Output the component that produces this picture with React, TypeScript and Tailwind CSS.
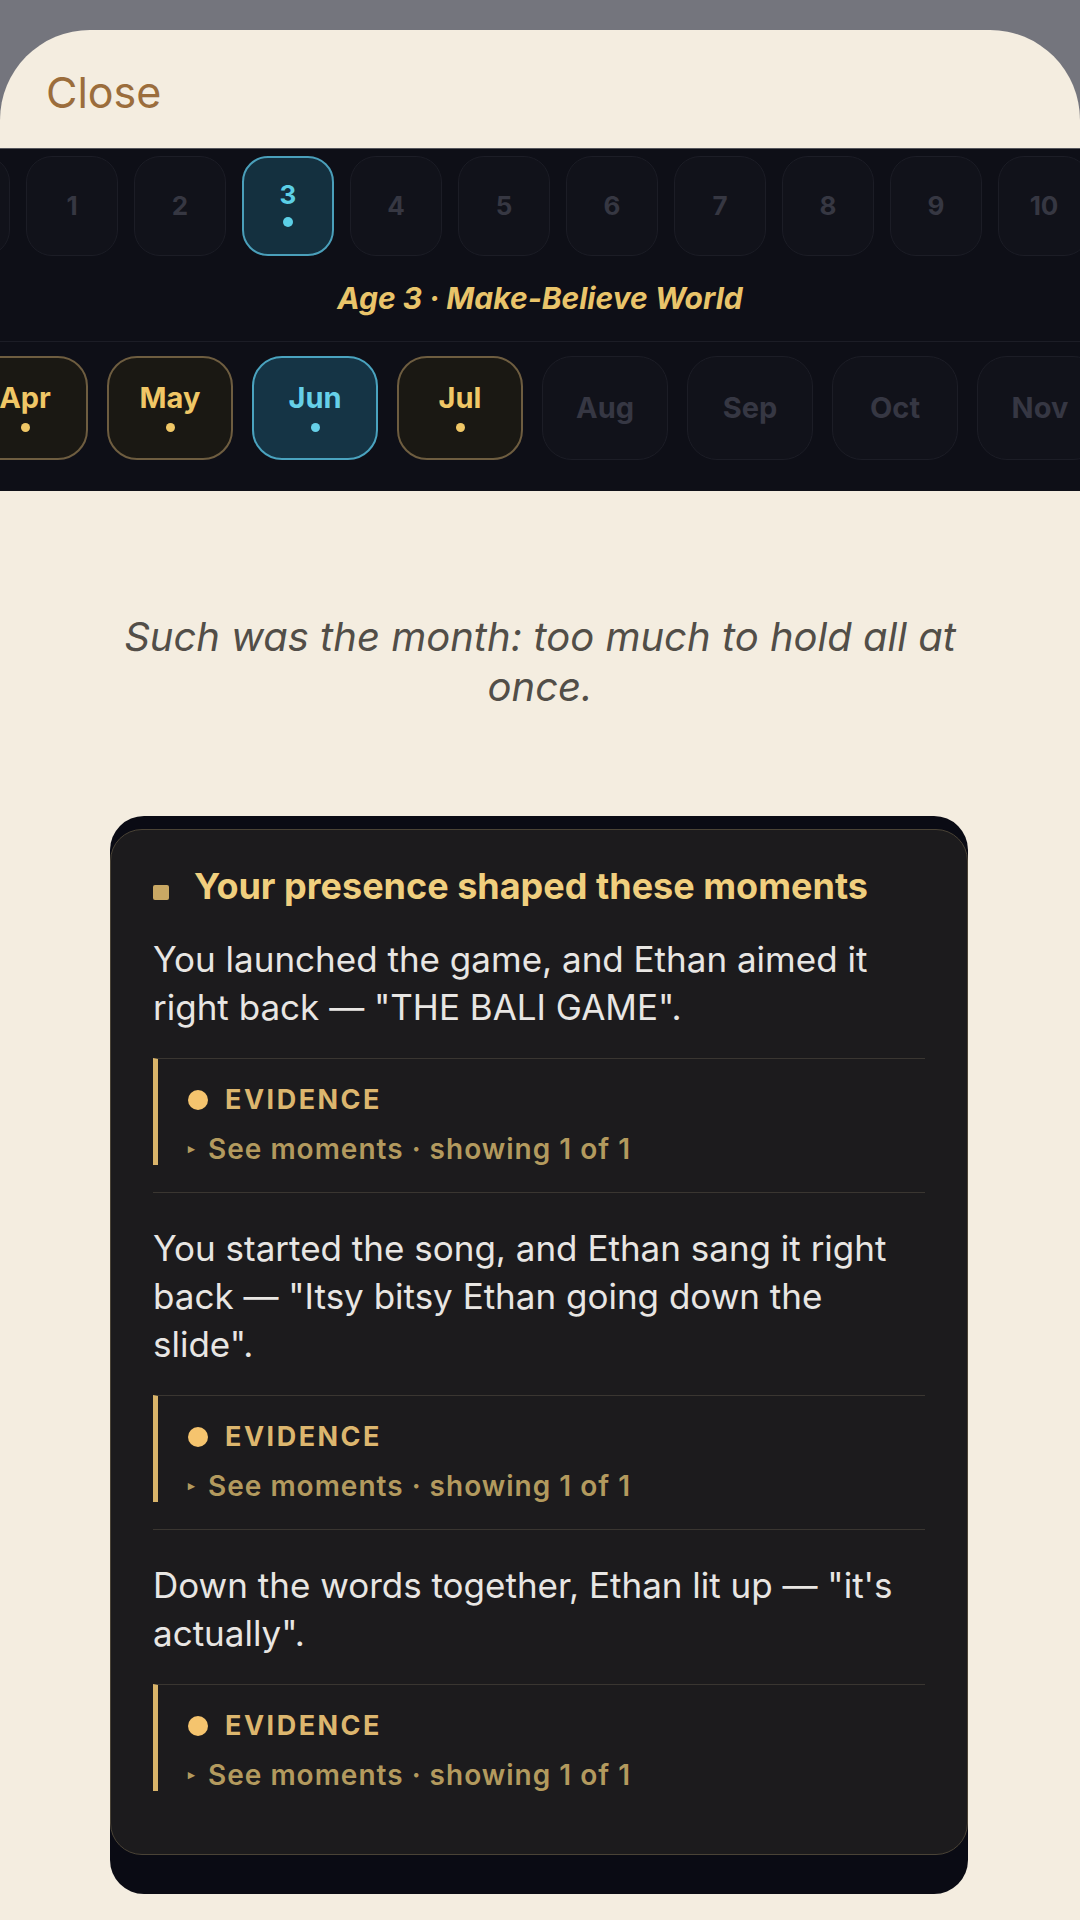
const ages = [0, 1, 2, 3, 4, 5, 6, 7, 8, 9, 10]
const months = [
  { m: "Apr", state: "done" },
  { m: "May", state: "done" },
  { m: "Jun", state: "active" },
  { m: "Jul", state: "done" },
  { m: "Aug", state: "off" },
  { m: "Sep", state: "off" },
  { m: "Oct", state: "off" },
  { m: "Nov", state: "off" },
  { m: "Dec", state: "off" },
]

const moments = [
  'You launched the game, and Ethan aimed it right back — "THE BALI GAME".',
  'You started the song, and Ethan sang it right back — "Itsy bitsy Ethan going down the slide".',
  'Down the words together, Ethan lit up — "it\'s actually".',
]

function AgeChip({ n }: { n: number }) {
  const active = n === 3
  return (
    <div
      className={`shrink-0 w-[92px] h-[100px] rounded-[26px] flex flex-col items-center justify-center ${
        active
          ? "bg-[#14303f] border-2 border-[#4a9fba]"
          : "bg-[#11121a] border-[1.5px] border-[#1c1d26]"
      }`}
    >
      <span
        className={`text-[26px] leading-[28px] font-bold ${
          active ? "text-[#5ccfe6] mt-[-4px]" : "text-[#363742]"
        }`}
      >
        {n}
      </span>
      {active && <span className="mt-[8px] h-[10px] w-[10px] rounded-full bg-[#5ccfe6]" />}
    </div>
  )
}

function MonthChip({ m, state }: { m: string; state: string }) {
  const box =
    state === "active"
      ? "bg-[#153445] border-2 border-[#4aa3bf]"
      : state === "done"
      ? "bg-[#1a1813] border-2 border-[#6e5d40]"
      : "bg-[#11121a] border-[1.5px] border-[#1c1d26]"
  const txt =
    state === "active" ? "text-[#66d0e8]" : state === "done" ? "text-[#f0c766]" : "text-[#363743]"
  const dot = state === "active" ? "bg-[#66d0e8]" : "bg-[#f0c766]"
  return (
    <div
      className={`shrink-0 w-[126px] h-[104px] rounded-[30px] flex flex-col items-center justify-center ${box}`}
    >
      <span className={`text-[29px] leading-[30px] font-bold ${txt} ${state === "off" ? "" : "mt-[-2px]"}`}>
        {m}
      </span>
      {state !== "off" && <span className={`mt-[10px] h-[9px] w-[9px] rounded-full ${dot}`} />}
    </div>
  )
}

function Evidence() {
  return (
    <div className="mt-[27px] border-t border-l-[5px] border-t-[#3a3631] border-l-[#d9b46a] pl-[30px] pt-[25px]">
      <div className="flex items-center h-[32px]">
        <span className="h-[20px] w-[20px] rounded-full bg-[#f5c46e]" />
        <span className="ml-[17px] text-[27px] font-bold tracking-[2.5px] text-[#dcb66e]">EVIDENCE</span>
      </div>
      <div className="flex items-center h-[32px] mt-[17px] text-[28px] font-semibold tracking-[1px] text-[#b39a5e]">
        <span className="text-[13px] mr-[12px]">▸</span>
        <span>See moments · showing 1 of 1</span>
      </div>
    </div>
  )
}

export default function App() {
  return (
    <div
      className="w-[1080px] h-[1920px] overflow-hidden bg-[#74757d]"
      style={{ fontFamily: "Inter, 'Liberation Sans', sans-serif" }}
    >
      <div className="mt-[30px] rounded-t-[90px] bg-[#f4ede0] h-[1890px] overflow-hidden">
        <div className="h-[118px] px-[46px] flex items-center pt-[6px]">
          <span className="text-[43px] text-[#9b6d3c]">Close</span>
        </div>

        <div className="bg-[#0e0f17] border-t border-[#55565c] pt-[7px] pb-[31px] overflow-hidden">
          <div className="flex gap-[16px] -ml-[82px]">
            {ages.map((n) => (
              <AgeChip key={n} n={n} />
            ))}
          </div>
          <div className="mt-[22px] text-center text-[30px] leading-[40px] font-bold italic text-[#e9c46a]">
            Age 3 · Make-Believe World
          </div>
          <div className="mt-[23px] border-t border-[#1c1d26]" />
          <div className="mt-[14px] flex gap-[19px] -ml-[38px]">
            {months.map((x) => (
              <MonthChip key={x.m} m={x.m} state={x.state} />
            ))}
          </div>
        </div>

        <p className="mt-[121px] px-[100px] text-center italic text-[40px] leading-[50px] text-[#524e48]">
          Such was the month: too much to hold all at once.
        </p>

        <div className="mt-[104px] ml-[110px] w-[858px] rounded-[34px] bg-[#0a0b14] pt-[13px] pb-[39px]">
          <div className="rounded-[32px] border-[1.5px] border-[#4a4336] bg-[#1c1b1d] px-[42px] pt-[34px] pb-[36px]">
            <div className="flex items-center h-[44px]">
              <span className="mt-[12px] h-[15px] w-[16px] rounded-[2px] bg-[#c9a864]" />
              <span className="ml-[25px] text-[36px] font-bold text-[#f0cf7e]">
                Your presence shaped these moments
              </span>
            </div>
            {moments.map((t, i) => (
              <div
                key={i}
                className={`${i === 0 ? "pt-[27px]" : "pt-[31px]"} pb-[27px] ${
                  i < moments.length - 1 ? "border-b border-[#3a3631]" : ""
                }`}
              >
                <p className="text-[35px] leading-[48px] text-[#e8e6e3]">{t}</p>
                <Evidence />
              </div>
            ))}
          </div>
        </div>
      </div>
    </div>
  )
}
